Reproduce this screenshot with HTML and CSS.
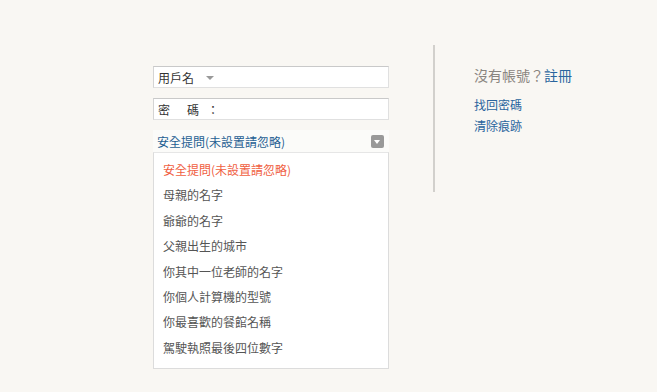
FILE: index.html
```html
<!DOCTYPE html>
<html lang="zh-Hant">
<head>
  <meta charset="UTF-8" />
  <title>登入</title>
  <link rel="stylesheet" href="styles.css">
</head>
<body>
  <div class="login">
    <div class="form">
      <div class="field">
        <span class="user-label">用戶名</span><span class="caret"></span>
      </div>
      <div class="field">
        <span class="pw-label"><span class="gap1">密</span><span class="gap2">碼</span>：</span>
      </div>
      <div class="select">
        <span>安全提問(未設置請忽略)</span>
        <span class="select-btn"></span>
      </div>
      <ul class="options">
        <li class="active">安全提問(未設置請忽略)</li>
        <li>母親的名字</li>
        <li>爺爺的名字</li>
        <li>父親出生的城市</li>
        <li>你其中一位老師的名字</li>
        <li>你個人計算機的型號</li>
        <li>你最喜歡的餐館名稱</li>
        <li>駕駛執照最後四位數字</li>
      </ul>
    </div>
    <div class="divider"></div>
    <div class="side">
      <p class="reg">沒有帳號？<a href="#">註冊</a></p>
      <a class="link" href="#">找回密碼</a>
      <a class="link" href="#">清除痕跡</a>
    </div>
  </div>
</body>
</html>
```

FILE: styles.css
```css
* {
  box-sizing: border-box;
  margin: 0;
  padding: 0;
}
body {
  background-color: #f9f7f3;
  font-family: "Noto Sans CJK TC", "Noto Sans", sans-serif;
  font-size: 12px;
  color: #444;
}
.login {
  display: flex;
  align-items: flex-start;
  padding: 45px 0 0 153px;
}
.form {
  width: 236px;
  margin-top: 21px;
}
.field {
  height: 22px;
  margin-bottom: 10px;
  padding-left: 4px;
  display: flex;
  align-items: center;
  background-color: #fff;
  border: 1px solid #e0e0e0;
  border-top-color: #c9c9c9;
  border-left-color: #d4d4d4;
  color: #333;
}
.caret {
  width: 0;
  height: 0;
  margin-left: 12px;
  margin-top: 2px;
  border-left: 4px solid transparent;
  border-right: 4px solid transparent;
  border-top: 4px solid #999;
}
.gap1 {
  margin-right: 17px;
}
.gap2 {
  margin-right: 8px;
}
.select {
  height: 22px;
  padding: 0 5px 0 4px;
  display: flex;
  align-items: center;
  justify-content: space-between;
  background-color: #fbfbf9;
  color: #1f5f93;
}
.select-btn {
  position: relative;
  width: 13px;
  height: 13px;
  border-radius: 2px;
  background-color: #999;
}
.select-btn::after {
  content: "";
  position: absolute;
  left: 3px;
  top: 5px;
  border-left: 3.5px solid transparent;
  border-right: 3.5px solid transparent;
  border-top: 4px solid #fff;
}
.options {
  list-style: none;
  height: 217px;
  padding: 4px 0 0 9px;
  background-color: #fff;
  border: 1px solid #dcdcdc;
  border-top-color: #e6e6e6;
}
.options li {
  height: 25.4px;
  line-height: 25.4px;
  color: #555;
}
.options li.active {
  color: #f0603f;
}
.divider {
  width: 2px;
  height: 147px;
  margin-left: 44px;
  background-color: #d2d0cc;
}
.side {
  display: flex;
  flex-direction: column;
  padding: 20px 0 0 39px;
}
.side a {
  text-decoration: none;
  color: #2a659e;
}
.reg {
  font-size: 14px;
  line-height: 20px;
  color: #8a8580;
  margin-bottom: 9px;
}
.link {
  line-height: 21px;
}
```
